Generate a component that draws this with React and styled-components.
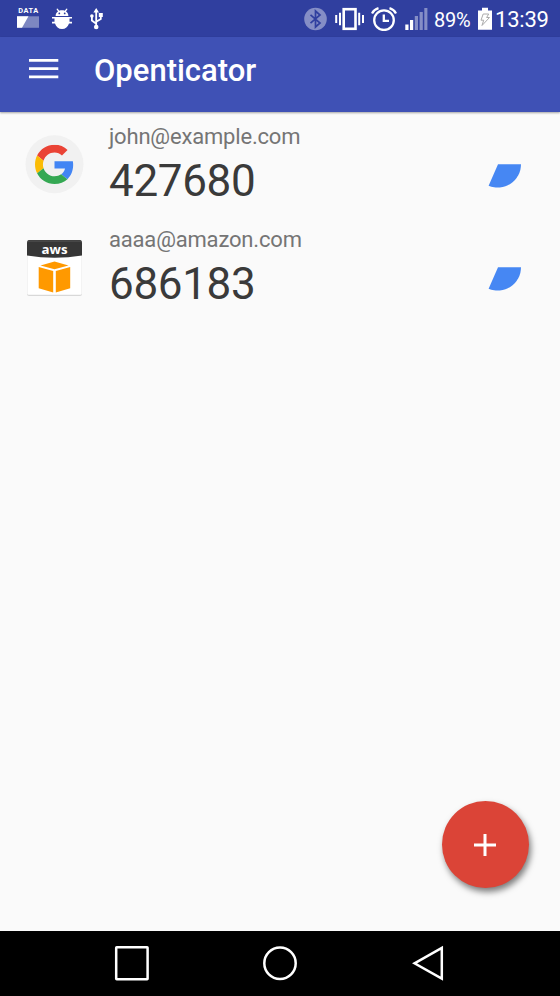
import React from "react";
import styled, { createGlobalStyle } from "styled-components";

const GlobalStyle = createGlobalStyle`
  * { box-sizing: border-box; }
  body { margin: 0; background: #fafafa; font-family: Roboto, sans-serif; }
  svg { display: block; flex: none; }
`;

const Screen = styled.div`
  display: flex;
  flex-direction: column;
  width: 560px;
  height: 996px;
  background: #fafafa;
  overflow: hidden;
`;

const StatusBar = styled.header`
  display: flex;
  align-items: center;
  flex: none;
  height: 37px;
  padding: 1px 11px 0 17px;
  background: #303f9f;
  color: #fff;
`;

const StatusGroup = styled.div`
  display: flex;
  align-items: center;
  gap: ${(p) => p.$gap}px;
  margin-left: ${(p) => (p.$end ? "auto" : "0")};
`;

const UsbSlot = styled.div`
  padding-left: 6px;
`;

const StatusText = styled.span`
  font-size: ${(p) => p.$size}px;
  line-height: 24px;
  width: ${(p) => p.$width}px;
  margin-left: ${(p) => p.$shift || 0}px;
  letter-spacing: -0.2px;
  padding-top: 1px;
  white-space: nowrap;
`;

const AppBar = styled.div`
  display: flex;
  align-items: center;
  flex: none;
  height: 75px;
  padding: 0 0 11px 29px;
  gap: 35px;
  background: #3f51b5;
  color: #fff;
  box-shadow: 0 1px 2px rgba(0, 0, 0, 0.35);
  z-index: 1;
`;

const MenuButton = styled.button`
  display: flex;
  padding: 0;
  border: 0;
  background: none;
`;

const Title = styled.h1`
  margin: 0;
  padding-top: 4px;
  font-size: 31px;
  line-height: 36px;
  font-weight: 500;
`;

const AccountList = styled.main`
  display: flex;
  flex-direction: column;
  flex: 1;
`;

const AccountRow = styled.section`
  display: flex;
  height: 103.4px;
  padding: 10px 38px 0 25px;
`;

const Logo = styled.div`
  padding-top: 13px;
  width: 84px;
`;

const Details = styled.div`
  flex: 1;
`;

const Email = styled.div`
  padding-top: 1px;
  font-size: 22px;
  line-height: 28px;
  letter-spacing: -0.18px;
  color: #757575;
`;

const Code = styled.div`
  font-size: 44px;
  line-height: 52px;
  margin-top: 4px;
  letter-spacing: -0.35px;
  color: #3a3a3a;
`;

const Timer = styled.div`
  padding-top: 42px;
`;

const FabArea = styled.div`
  display: flex;
  justify-content: flex-end;
  margin-top: auto;
  padding: 0 31px 43px 0;
`;

const Fab = styled.button`
  display: flex;
  align-items: center;
  justify-content: center;
  width: 87px;
  height: 87px;
  padding: 0 1px 0 0;
  border: 0;
  border-radius: 50%;
  background: #db4437;
  box-shadow: 2px 4px 6px rgba(0, 0, 0, 0.5);
`;

const NavBar = styled.nav`
  display: flex;
  align-items: center;
  justify-content: space-between;
  flex: none;
  height: 65px;
  padding: 0 116px 1px 114px;
  background: #000;
`;

const DataIcon = () => (
  <svg width="23" height="28" viewBox="0 -3 23 28">
    <text x="1.2" y="5.2" textLength="20" fontSize="7.4" fontWeight="700" fill="#fff" fontFamily="Roboto, sans-serif">DATA</text>
    <path d="M0 8.3H22V19.8H0Z" fill="#7d87c1" />
    <path d="M0 8.3H11.5L5 19.8H0Z" fill="#fff" />
  </svg>
);

const BugIcon = () => (
  <svg width="20" height="22" viewBox="0 0 20 22" fill="#fff">
    <path d="M3.6 8C3.6 5.8 4.6 4.3 6 3.5L4.4 1.1L5.5.4L7.3 2.8C9 2.2 11 2.2 12.7 2.8L14.5.4L15.6 1.1L14 3.5C15.4 4.3 16.4 5.8 16.4 8Z" />
    <circle cx="7.3" cy="5.4" r=".9" fill="#303f9f" />
    <circle cx="12.7" cy="5.4" r=".9" fill="#303f9f" />
    <path d="M0 8.9H20V10.6H17.5V13.7H20V15.4H17C16 18.9 13.4 20.9 10 20.9S4 18.9 3 15.4H0V13.7H2.5V10.6H0Z" />
  </svg>
);

const UsbIcon = () => (
  <svg width="13" height="22" viewBox="0 0 13 22">
    <path d="M6.2 3V18M6.2 15.8L1.9 12.5V8.5M6.2 13.8L10.8 11V7" fill="none" stroke="#fff" strokeWidth="1.8" />
    <path d="M6.2 0L9 4.5H3.4ZM8.8 5H12.8V9H8.8Z" fill="#fff" />
    <circle cx="1.9" cy="8" r="1.8" fill="#fff" />
    <circle cx="6.2" cy="19" r="2.3" fill="#fff" />
  </svg>
);

const BluetoothIcon = () => (
  <svg width="23" height="24" viewBox="0 0 23 24">
    <circle cx="11.5" cy="12" r="11.3" fill="#858ec6" />
    <path d="M6.5 7.8L16 16L11.5 20V4L16 8L6.5 16.2" fill="none" stroke="#303f9f" strokeWidth="1.7" />
  </svg>
);

const VibrateIcon = () => (
  <svg width="29" height="24" viewBox="0 0 29 24" fill="none" stroke="#fff" strokeWidth="2">
    <rect x="8.7" y="2.2" width="11.8" height="19.6" strokeWidth="2.6" />
    <path d="M1.2 8V16M5 5.8V18.2M24.2 5.8V18.2M28 8V16" />
  </svg>
);

const AlarmIcon = () => (
  <svg width="26" height="24" viewBox="0 0 26 24" fill="none" stroke="#fff" strokeWidth="2.3">
    <circle cx="13" cy="13.2" r="9.8" />
    <path d="M12.8 7.5V13.8H18M1 6.5Q3 2.5 7.5 1.2M25 6.5Q23 2.5 18.5 1.2" />
  </svg>
);

const SignalIcon = () => (
  <svg width="23" height="24" viewBox="0 0 23 24">
    <path d="M.3 17.5H3.5V23H.3ZM5 13H8.2V23H5Z" fill="#fff" />
    <path d="M9.8 9H13V23H9.8ZM14.6 5H17.8V23H14.6ZM19.3 1H22.4V23H19.3Z" fill="#858ec6" />
  </svg>
);

const BatteryIcon = () => (
  <svg width="14" height="24" viewBox="0 0 14 24">
    <path d="M4 .8H10V3.6H14V22.8H0V3.6H4Z" fill="#fff" />
    <path d="M5.2 7H10.7L8.6 10.5H11.5L4 18.5L5.7 13.2H3Z" fill="#fff" stroke="#aaa" strokeWidth="1" />
  </svg>
);

const MenuIcon = () => (
  <svg width="30" height="22" viewBox="0 0 30 22">
    <path d="M0 2.4H29.3M0 10.6H29.3M0 18.8H29.3" stroke="#fff" strokeWidth="2.8" />
  </svg>
);

const GoogleLogo = () => (
  <svg width="59" height="59" viewBox="0 0 59 59">
    <circle cx="29.5" cy="29.3" r="29" fill="#f1f1f1" />
    <svg x="10" y="9.8" width="39" height="39.2" viewBox="0 0 48 48" preserveAspectRatio="none">
      <path fill="#ea4335" d="M24 9.5c3.54 0 6.71 1.22 9.21 3.6l6.85-6.85C35.9 2.38 30.47 0 24 0 14.62 0 6.51 5.38 2.56 13.22l7.98 6.19C12.43 13.72 17.74 9.5 24 9.5z" />
      <path fill="#4285f4" d="M46.98 24.55c0-1.57-.15-3.09-.38-4.55H24v9.02h12.94c-.58 2.96-2.26 5.48-4.78 7.18l7.73 6c4.51-4.18 7.09-10.36 7.09-17.65z" />
      <path fill="#fbbc05" d="M10.53 28.59c-.48-1.45-.76-2.99-.76-4.59s.27-3.14.76-4.59l-7.98-6.19C.92 16.46 0 20.12 0 24c0 3.88.92 7.54 2.56 10.78l7.97-6.19z" />
      <path fill="#34a853" d="M24 48c6.48 0 11.93-2.13 15.89-5.81l-7.73-6c-2.15 1.45-4.92 2.3-8.16 2.3-6.26 0-11.57-4.22-13.47-9.91l-7.98 6.19C6.51 42.62 14.62 48 24 48z" />
    </svg>
  </svg>
);

const AwsLogo = () => (
  <svg width="59" height="59" viewBox="0 0 59 59">
    <rect x="2" y="3.5" width="55" height="54.6" rx="2" fill="#d8d8d8" />
    <rect x="2.3" y="3.5" width="54.4" height="53.3" rx="1.5" fill="#fff" />
    <path d="M2 17.5V5Q2 2 4 2H55Q57 2 57 5V17.5Q29.5 22 2 17.5Z" fill="#363636" />
    <path d="M3 3.1H56" stroke="#555" />
    <text x="29.5" y="15.8" textAnchor="middle" textLength="26" lengthAdjust="spacingAndGlyphs" fontFamily="Open Sans, sans-serif" fontWeight="700" fontSize="12.5" fill="#fff">aws</text>
    <path d="M15.5 27.5L29.5 23.5L43.5 27.5L29.5 31.3ZM13.7 29L28.2 33V54.5L13.7 50.2ZM30.8 33L45.2 29V50.2L30.8 54.5Z" fill="#ff9900" />
  </svg>
);

const PieIcon = () => (
  <svg width="34" height="26" viewBox="0 0 34 26">
    <path d="M10 .2H33A23.3 23.3 0 0 1 .6 21.7Z" fill="#4687f3" />
  </svg>
);

const PlusIcon = () => (
  <svg width="22" height="22" viewBox="0 0 22 22">
    <path d="M0 11H22M11 0V22" stroke="#fff" strokeWidth="3" />
  </svg>
);

const RecentsIcon = () => (
  <svg width="36" height="36" viewBox="0 0 36 36">
    <rect x="2.2" y="2.2" width="31.4" height="32" rx=".5" fill="none" stroke="#fff" strokeWidth="2.5" />
  </svg>
);

const HomeIcon = () => (
  <svg width="36" height="36" viewBox="0 0 36 36">
    <circle cx="17" cy="18.3" r="15.7" fill="none" stroke="#fff" strokeWidth="2.5" />
  </svg>
);

const BackIcon = () => (
  <svg width="32" height="36" viewBox="0 0 32 36">
    <path d="M2.5 18.3L29.8 3V33.5Z" fill="none" stroke="#fff" strokeWidth="2.5" />
  </svg>
);

const accounts = [
  { email: "john@example.com", code: "427680", logo: <GoogleLogo /> },
  { email: "aaaa@amazon.com", code: "686183", logo: <AwsLogo /> },
];

export default function App() {
  return (
    <Screen>
      <GlobalStyle />
      <StatusBar>
        <StatusGroup $gap={12}>
          <DataIcon />
          <BugIcon />
          <UsbSlot><UsbIcon /></UsbSlot>
        </StatusGroup>
        <StatusGroup $end $gap={7.5}>
          <BluetoothIcon />
          <VibrateIcon />
          <AlarmIcon />
          <SignalIcon />
          <StatusText $size={20} $width={36.5} $shift={-1}>89%</StatusText>
          <StatusGroup $gap={3}>
            <BatteryIcon />
            <StatusText $size={22} $width={54}>13:39</StatusText>
          </StatusGroup>
        </StatusGroup>
      </StatusBar>
      <AppBar>
        <MenuButton aria-label="Menu"><MenuIcon /></MenuButton>
        <Title>Openticator</Title>
      </AppBar>
      <AccountList>
        {accounts.map((a) => (
          <AccountRow key={a.email}>
            <Logo>{a.logo}</Logo>
            <Details>
              <Email>{a.email}</Email>
              <Code>{a.code}</Code>
            </Details>
            <Timer><PieIcon /></Timer>
          </AccountRow>
        ))}
        <FabArea>
          <Fab aria-label="Add account"><PlusIcon /></Fab>
        </FabArea>
      </AccountList>
      <NavBar>
        <RecentsIcon />
        <HomeIcon />
        <BackIcon />
      </NavBar>
    </Screen>
  );
}
